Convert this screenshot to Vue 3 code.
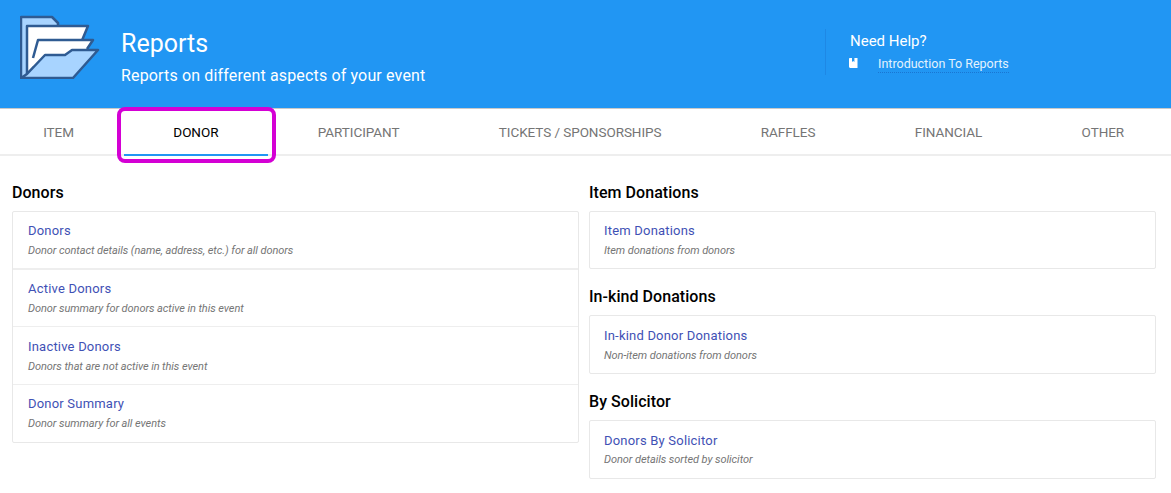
<script setup>
const tabs = ['Item', 'Donor', 'Participant', 'Tickets / Sponsorships', 'Raffles', 'Financial', 'Other'];

const leftGroups = [
	{
		title: 'Donors',
		reports: [
			{ name: 'Donors', desc: 'Donor contact details (name, address, etc.) for all donors' },
			{ name: 'Active Donors', desc: 'Donor summary for donors active in this event' },
			{ name: 'Inactive Donors', desc: 'Donors that are not active in this event' },
			{ name: 'Donor Summary', desc: 'Donor summary for all events' },
		],
	},
];

const rightGroups = [
	{
		title: 'Item Donations',
		reports: [{ name: 'Item Donations', desc: 'Item donations from donors' }],
	},
	{
		title: 'In-kind Donations',
		reports: [{ name: 'In-kind Donor Donations', desc: 'Non-item donations from donors' }],
	},
	{
		title: 'By Solicitor',
		reports: [{ name: 'Donors By Solicitor', desc: 'Donor details sorted by solicitor' }],
	},
];

const columns = [leftGroups, rightGroups];
</script>

<template>
	<div class="page">
		<header class="banner">
			<svg class="banner__icon" width="80" height="64" viewBox="20 15 80 64" fill="none" xmlns="http://www.w3.org/2000/svg">
				<path d="M21 17H52L58 23V78H21Z" fill="#a8d4ff" stroke="#2f5b92" stroke-width="2.5" stroke-linejoin="round" />
				<path d="M27 26H88L78 50H50L27 74Z" fill="#fff" stroke="#2f5b92" stroke-width="2.5" stroke-linejoin="round" />
				<path d="M33 58L38 40H93L86 50H72L65 55H45L33 68Z" fill="#fff" />
				<path d="M33 58L38 40H93L87 49" stroke="#2f5b92" stroke-width="2.5" stroke-linejoin="round" />
				<path d="M21 78H73L98 50H72L65 55H45L27 74L21 78Z" fill="#a8d4ff" stroke="#2f5b92" stroke-width="2.5" stroke-linejoin="round" />
			</svg>
			<div class="banner__text">
				<h1 class="banner__title">Reports</h1>
				<p class="banner__sub">Reports on different aspects of your event</p>
			</div>
			<aside class="help">
				<div class="help__title">Need Help?</div>
				<div class="help__row">
					<svg class="help__icon" width="9" height="10" viewBox="0 0 9 10" xmlns="http://www.w3.org/2000/svg">
						<path d="M1 0H8.5V10H1.5C.7 10 0 9.3 0 8.5V1C0 .4 .4 0 1 0ZM3 0V4L4.2 3L5.4 4V0Z" fill="#fff" fill-rule="evenodd" />
					</svg>
					<span class="help__link">Introduction To Reports</span>
				</div>
			</aside>
		</header>

		<nav class="tabs">
			<div
				v-for="tab in tabs"
				:key="tab"
				class="tabs__item"
				:class="{ 'tabs__item--active': tab === 'Donor' }"
			>
				{{ tab }}
			</div>
			<div class="tabs__mark"></div>
		</nav>

		<main class="content">
			<div v-for="(groups, i) in columns" :key="i" class="column">
				<section v-for="group in groups" :key="group.title" class="group">
					<h2 class="group__title">{{ group.title }}</h2>
					<div class="card">
						<div v-for="report in group.reports" :key="report.name" class="report">
							<div class="report__name">{{ report.name }}</div>
							<div class="report__desc">{{ report.desc }}</div>
						</div>
					</div>
				</section>
			</div>
		</main>
	</div>
</template>

<style scoped>
.page {
	font-family: Roboto, "Liberation Sans", sans-serif;
	background: #fff;
	height: 493px;
	overflow: hidden;
}
.banner {
	display: flex;
	align-items: flex-start;
	height: 108px;
	background: #2196f3;
	color: #fff;
	padding: 15px 0 0 20px;
	box-sizing: border-box;
}
.banner__icon {
	flex: none;
}
.banner__text {
	margin: 14px 0 0 21px;
	flex: 1;
}
.banner__title {
	margin: 0;
	font-size: 25px;
	line-height: 30px;
	font-weight: 400;
}
.banner__sub {
	margin: 7px 0 0;
	font-size: 16px;
	line-height: 19px;
	letter-spacing: .15px;
}
.help {
	width: 346px;
	height: 46px;
	margin-top: 14px;
	padding-left: 24px;
	box-sizing: border-box;
	border-left: 1px solid #1e88e5;
}
.help__title {
	font-size: 15px;
	line-height: 24px;
}
.help__row {
	display: flex;
	align-items: center;
	margin-top: 3px;
}
.help__icon {
	margin-right: 20px;
	margin-top: -3px;
	margin-left: -1px;
}
.help__link {
	font-size: 12.5px;
	line-height: 16px;
	color: #e3f2fd;
	border-bottom: 1px dotted #1976d2;
}
.tabs {
	position: relative;
	display: flex;
	height: 48px;
	border-top: 1px solid #c9c9c9;
	border-bottom: 2px solid #eee;
	box-sizing: border-box;
}
.tabs__item {
	flex: none;
	height: 47px;
	padding: 0 49.7px;
	text-align: center;
	font-size: 13.5px;
	font-weight: 400;
	letter-spacing: -.06px;
	line-height: 47px;
	text-transform: uppercase;
	color: #757575;
	white-space: nowrap;
	box-sizing: border-box;
}
.tabs__item:first-child {
	margin-left: -6.5px;
}
.tabs__item--active {
	color: #000;
	border-bottom: 2px solid #2196f3;
}
.tabs__mark {
	position: absolute;
	left: 117px;
	top: -2px;
	width: 159px;
	height: 56px;
	border: 4px solid #d400d4;
	border-radius: 8px;
	box-sizing: border-box;
}
.content {
	display: grid;
	grid-template-columns: 567px 567px;
	column-gap: 10px;
	padding: 27px 0 0 12px;
}
.group {
	margin-bottom: 18px;
}
.group__title {
	margin: 0 0 8px;
	font-size: 16px;
	line-height: 20px;
	font-weight: 500;
	letter-spacing: .05px;
	color: #000;
}
.card {
	border: 1px solid #e8e8e8;
	border-radius: 2px;
}
.report {
	height: 58px;
	padding: 11px 15px 0;
	box-sizing: border-box;
	border-top: 1px solid #eee;
}
.report:first-child {
	height: 56px;
	border-top: 0;
}
.report:nth-child(2) {
	border-top-width: 2px;
}
.report:nth-child(3) {
	padding-top: 12px;
}
.column:last-child .report {
	padding-left: 14px;
}
.column:last-child .group:nth-child(n+2) .report {
	height: 57px;
	padding-top: 12px;
}
.report__name {
	font-size: 13px;
	line-height: 16px;
	letter-spacing: .2px;
	color: #3f51b5;
}
.report__desc {
	margin-top: 5px;
	font-size: 11px;
	line-height: 14px;
	letter-spacing: -.07px;
	font-style: italic;
	color: #757575;
}
.column:last-child .group:last-child .report__desc {
	margin-top: 4px;
}
</style>
